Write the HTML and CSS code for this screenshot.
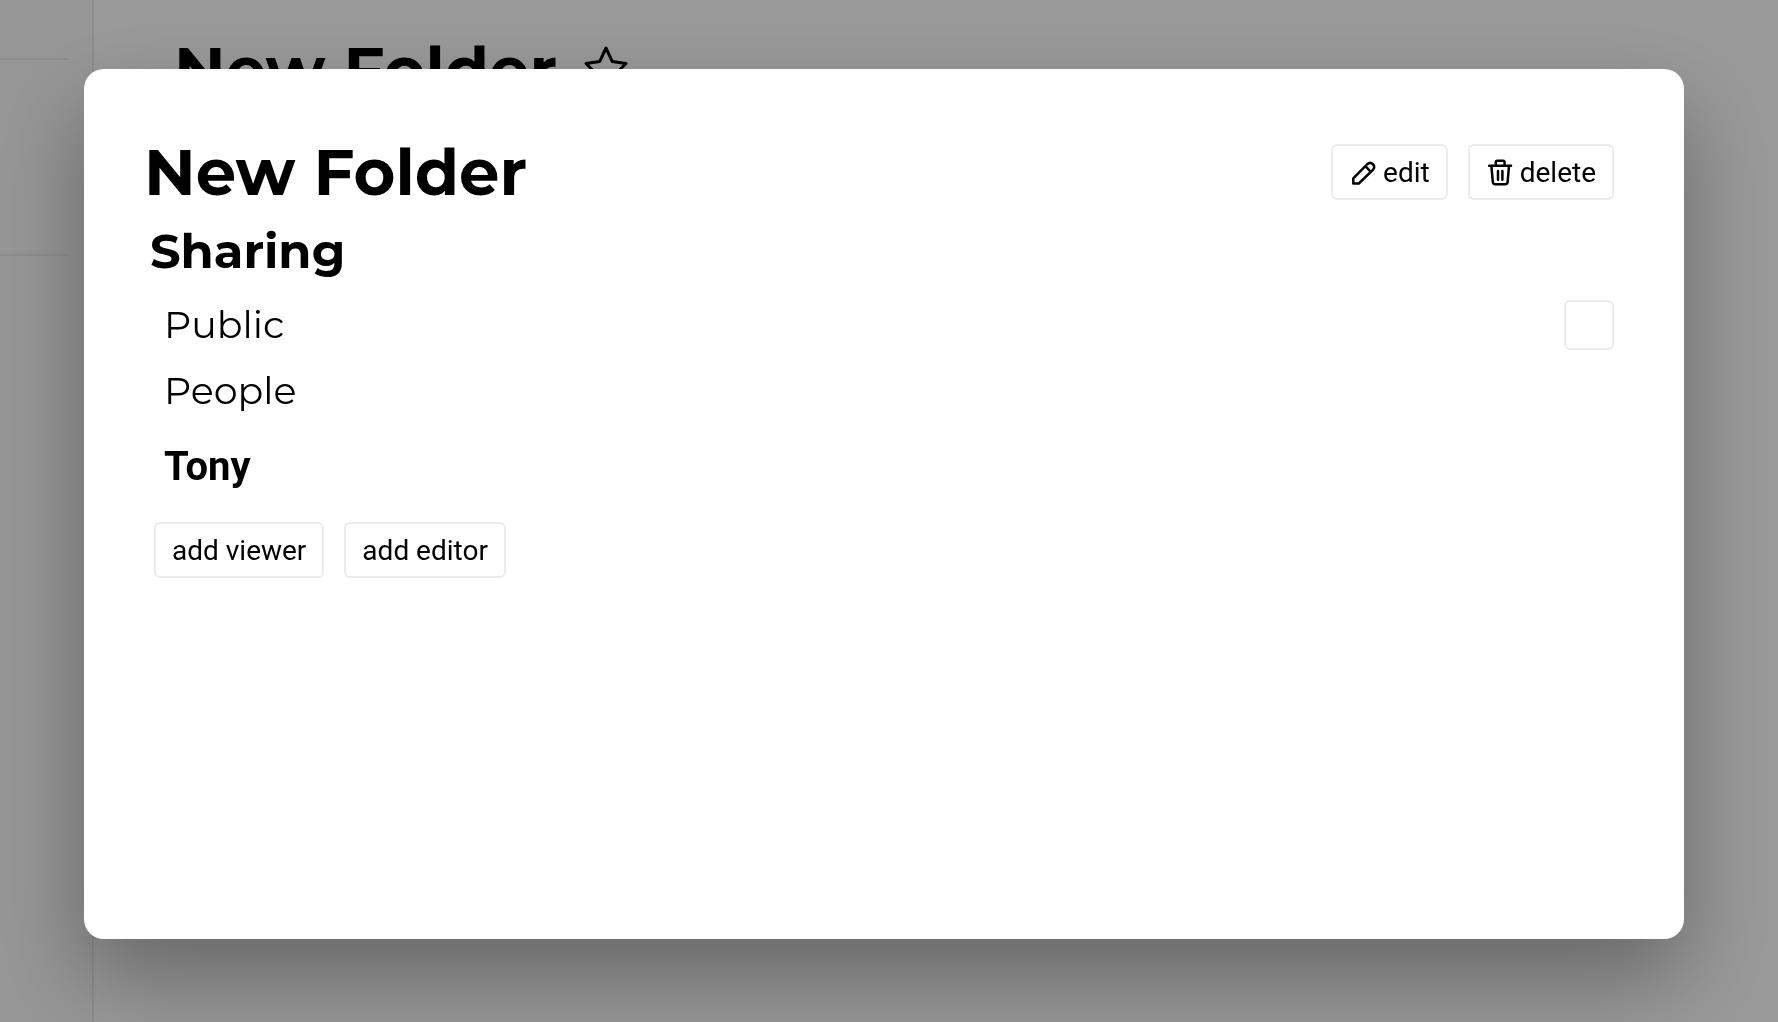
FILE: index.html
```html
<!DOCTYPE html>
<html lang="en">
<head>
<meta charset="utf-8">
<meta name="viewport" content="width=device-width, initial-scale=1">
<title>New Folder</title>
<link rel="stylesheet" href="styles.css">
</head>
<body>
<div class="app">
  <nav class="sidebar" aria-label="Folders">
    <div class="sidebar-item"></div>
  </nav>
  <main class="page">
    <h1 class="title">New Folder</h1>
    <svg class="star" viewBox="0 0 48 48" aria-hidden="true"><path d="M24 4 30.200 17.400 44 19.500 34 29.500 36.400 43.500 24 36.800 11.600 43.500 14 29.500 4 19.500 17.800 17.400Z"/></svg>
  </main>
</div>
<div class="overlay">
  <section class="modal" role="dialog" aria-modal="true" aria-labelledby="dialog-title">
    <header class="modal-header">
      <h1 class="title" id="dialog-title">New Folder</h1>
      <div class="actions">
        <button class="button" type="button">
          <svg class="icon" viewBox="0 0 28 28" aria-hidden="true"><path d="M4.300 24.500v-5.200L18.300 5.200q3-2.600 5.600 0t0 5.600L9.800 24.500ZM16.300 7.200l5.600 5.600"/></svg>
          edit
        </button>
        <button class="button" type="button">
          <svg class="icon" viewBox="0 0 28 28" aria-hidden="true"><path d="M3.200 6.700h21.800M9.800 6.500V3.200q0-1.500 1.500-1.500h5.800q1.500 0 1.500 1.500v3.300M5.400 7l1.400 16q.2 2.300 2.400 2.300h10q2.200 0 2.400-2.300L23 7M12 12v8.700M16.400 12v8.700"/></svg>
          delete
        </button>
      </div>
    </header>
    <h2 class="subtitle">Sharing</h2>
    <div class="row">
      <label class="label" for="public">Public</label>
      <input class="checkbox" id="public" type="checkbox">
    </div>
    <h3 class="label">People</h3>
    <p class="person">Tony</p>
    <div class="actions add-actions">
      <button class="button" type="button">add viewer</button>
      <button class="button" type="button">add editor</button>
    </div>
  </section>
</div>
</body>
</html>
```
FILE: styles.css
```css
* {
  box-sizing: border-box;
}

body {
  margin: 0;
  color: #000;
  font-family: Roboto, sans-serif;
  font-size: 28px;
  overflow: hidden;
}

h1, h2, h3, p {
  margin: 0;
}

.app {
  display: flex;
  min-height: 100vh;
  background: #fff;
}

.sidebar {
  flex: 0 0 94px;
  padding: 58px 24px 0 0;
  background: #fafafa;
  border-right: 2px solid #ebebeb;
}

.sidebar-item {
  height: 198px;
  border: solid #ebebeb;
  border-width: 2px 0;
}

.page {
  flex: 1;
  display: flex;
  align-items: flex-start;
  gap: 25px;
  padding: 30px 80px;
}

.title {
  font: 700 64px/80px Montserrat, Inter, sans-serif;
}

.star {
  width: 48px;
  height: 48px;
  margin-top: 14px;
  fill: none;
  stroke: #000;
  stroke-width: 3;
  stroke-linejoin: round;
}

.overlay {
  position: fixed;
  inset: 0;
  padding: 69px 94px 83px 84px;
  background: rgba(0, 0, 0, 0.4);
}

.modal {
  height: 100%;
  padding: 63px 70px 60px 60px;
  background: #fff;
  border-radius: 20px;
  box-shadow: 0 40px 90px rgba(0, 0, 0, 0.33);
}

.modal-header,
.row {
  display: flex;
  align-items: center;
  justify-content: space-between;
}

.actions {
  display: flex;
  gap: 20px;
}

.button {
  display: flex;
  align-items: center;
  gap: 6px;
  height: 56px;
  padding: 2px 16px 0;
  background: #fff;
  border: 2px solid #ebebeb;
  border-radius: 6px;
  color: #000;
  font: 400 28px/32px Roboto, sans-serif;
}

.icon {
  width: 28px;
  height: 28px;
  fill: none;
  stroke: #000;
  stroke-width: 2.500;
  stroke-linecap: round;
  stroke-linejoin: round;
}

.subtitle {
  padding-left: 6px;
  font: 700 48px/78px Montserrat, Inter, sans-serif;
}

.row {
  padding-top: 2px;
}

.label {
  padding-left: 20px;
  font: 400 38px/66px Montserrat, Inter, sans-serif;
}

.checkbox {
  appearance: none;
  width: 50px;
  height: 50px;
  margin: 0;
  background: #fff;
  border: 2px solid #ebebeb;
  border-radius: 6px;
}

.person {
  padding: 10px 0 0 20px;
  font: 700 40px/66px Roboto, sans-serif;
}

.add-actions {
  padding: 22px 0 0 10px;
}
```
